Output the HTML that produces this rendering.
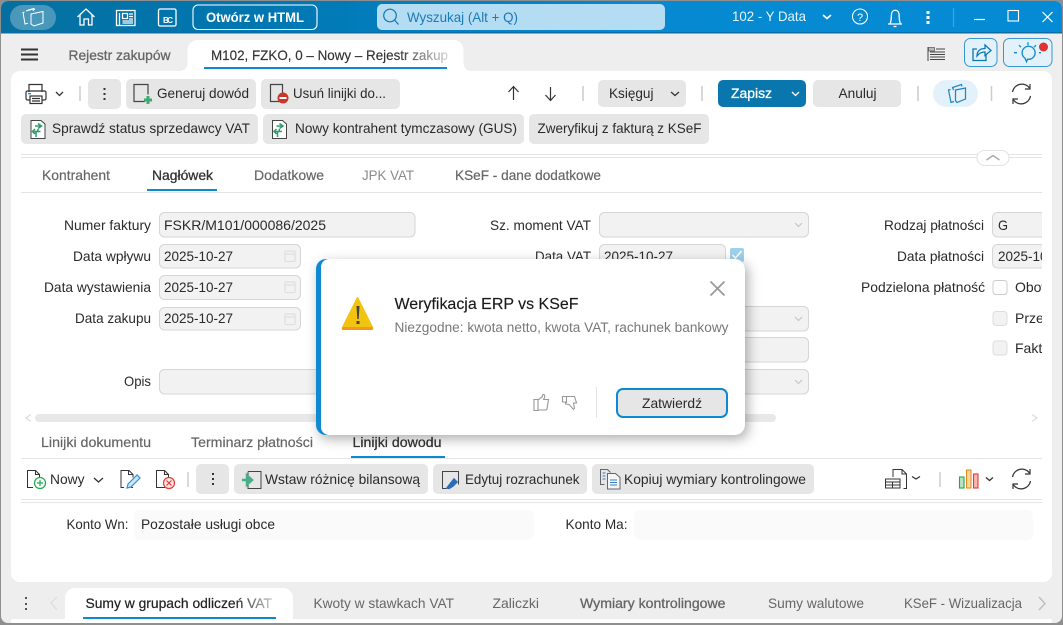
<!DOCTYPE html>
<html lang="pl"><head><meta charset="utf-8"><title>Rejestr zakupów</title>
<style>
html,body{margin:0;padding:0;width:1063px;height:625px;overflow:hidden;background:#fff}
svg{display:block;font-family:"Liberation Sans",sans-serif;font-size:14px}
.l{fill:#2a2a2a}.g{fill:#666}.b{font-weight:bold}
.f{fill:#f2f2f2;stroke:#d6d6d6}
.btn{fill:#e6e6e6}
.i{fill:none;stroke:#333;stroke-width:1.2}
.w{fill:none;stroke:#fff;stroke-width:1.3}
.sep{stroke:#ccc;stroke-width:1.5}
.cal{fill:none;stroke:#e0e0e0;stroke-width:1.3}
.chev{fill:none;stroke:#333;stroke-width:1.3}
.cg{fill:none;stroke:#c2c2c2;stroke-width:1}
</style></head><body>
<svg width="1063" height="625" viewBox="0 0 1063 625" xmlns="http://www.w3.org/2000/svg">
<defs>
<linearGradient id="tb" x1="0" x2="1" y1="0" y2="0"><stop offset="0" stop-color="#05709f"/><stop offset=".25" stop-color="#0077b2"/><stop offset=".6" stop-color="#0689d0"/><stop offset="1" stop-color="#058bd5"/></linearGradient>
<linearGradient id="fd1" gradientUnits="userSpaceOnUse" x1="398" x2="450" y1="0" y2="0"><stop offset="0" stop-color="#333"/><stop offset="1" stop-color="#ddd"/></linearGradient>
<linearGradient id="fd2" gradientUnits="userSpaceOnUse" x1="235" x2="273" y1="0" y2="0"><stop offset="0" stop-color="#222"/><stop offset="1" stop-color="#ccc"/></linearGradient>
<filter id="sh" x="-15%" y="-20%" width="130%" height="140%"><feDropShadow dx="3" dy="4" stdDeviation="6" flood-color="#000" flood-opacity=".32"/></filter>
<clipPath id="cr"><rect x="0" y="190" width="1042" height="240"/></clipPath>
</defs>
<rect width="1063" height="625" fill="#8f8f8f"/>
<rect x="1" y="1" width="1061" height="622" rx="7" fill="#eee"/>
<path d="M1 33V8a7 7 0 0 1 7-7h1047a7 7 0 0 1 7 7v25z" fill="url(#tb)"/>
<rect x="1" y="32" width="1061" height="1.5" fill="#0a6ea6"/>

<!-- title bar -->
<rect x="10" y="5" width="46" height="25" rx="12.5" fill="#fff" fill-opacity=".28"/>
<g class="w" style="stroke-width:1"><path d="M26 11l7-2 .5 2M24.500 12l-1.500.5 2 11.500 3-.8M28 10l6-1.500 .5 1.500"/><path d="M31 14l12-2.500v11.500l-9 3-3-2z"/></g>
<path d="M77.500 17l8.500-8 8.500 8M80 15v10h4v-6h4.500v6h3.500V15" class="w"/>
<g class="w" transform="translate(1.500 0)"><rect x="115" y="10.500" width="18.500" height="15"/><path d="M118 13v12M121 13.500h5v5h-5zM127.500 14h4M127.500 16.500h4M127.500 19h4M121 21h10.500M121 23h10.500"/></g>
<rect x="158.500" y="9" width="17.500" height="17" rx="1.500" class="w"/><text x="163" y="23" fill="#fff" font-size="8" font-weight="bold" textLength="10">BC</text>
<rect x="193" y="5" width="124" height="24.500" rx="5" fill="none" stroke="#fff" stroke-width="1.100"/>
<text x="206" y="22" fill="#fff" class="b" font-size="14" textLength="98" lengthAdjust="spacingAndGlyphs">Otwórz w HTML</text>
<rect x="377" y="4" width="288" height="26" rx="5" fill="#b4dcf3"/>
<circle cx="390" cy="15.500" r="6.300" fill="none" stroke="#1277b0" stroke-width="1.200"/><path d="M394.500 20l4 4.500" stroke="#1277b0" stroke-width="1.200"/>
<text x="407" y="22" fill="#1a7bb5" font-size="14" textLength="111" lengthAdjust="spacingAndGlyphs">Wyszukaj (Alt + Q)</text>
<text x="732" y="21" fill="#e6f4fc" font-size="14" textLength="74" lengthAdjust="spacingAndGlyphs">102 - Y Data</text>
<path d="M823 15l4 3.500 4-3.500" fill="none" stroke="#fff" stroke-width="1.600"/>
<circle cx="860" cy="16.500" r="7.500" class="w" style="stroke-width:1.100"/><text x="857" y="21" fill="#fff" font-size="11">?</text>
<path d="M888 24h14M890 24c1.500-3 1-6 1.500-10 .5-5 7-5 7.500 0 .4 4 0 7 1.500 10M893.500 26.500h3" class="w"/>
<g fill="#fff"><rect x="926.500" y="11" width="3" height="3"/><rect x="926.500" y="16" width="3" height="3"/><rect x="926.500" y="21" width="3" height="3"/></g>
<path d="M953.500 8v19" stroke="#3da2dc" stroke-width="1.300"/>
<path d="M974 19.500h11" stroke="#fff" stroke-width="1.200"/>
<rect x="1008" y="10.500" width="10.500" height="10.500" class="w" style="stroke-width:1.100"/>
<path d="M1042.500 12l10 10M1052.500 12l-10 10" class="w" style="stroke-width:1.200"/>

<!-- window tabs -->
<path d="M21 49.500h17M21 54.500h17M21 59.500h17" stroke="#333" stroke-width="2"/>
<text x="68.500" y="60" class="g" font-size="14" textLength="102" lengthAdjust="spacingAndGlyphs" stroke="#666" stroke-width=".3">Rejestr zakupów</text>
<g transform="translate(927 0)" stroke="#444" fill="none"><path d="M1 47v14" stroke-width="1"/><rect x="1.500" y="47.500" width="6" height="3.500" fill="#bbb" stroke="#555" stroke-width=".7"/><path d="M9 49h9M3 52h15M3 54.500h15M3 57h15M3 59.500h15" stroke-width="1.100"/></g>
<rect x="964.500" y="38.500" width="32.500" height="28" rx="6" fill="#e3f1fa" stroke="#3a97cc"/>
<path d="M986 55v5.500h-13V49h4M977 56c0-5 3-7.500 8-7.500V45l6 5.500-6 5v-3.500c-3 0-6 1-8 4z" fill="none" stroke="#0b78b4" stroke-width="1.300"/>
<rect x="1003.500" y="38.500" width="48.500" height="28" rx="6" fill="#e3f1fa" stroke="#3a97cc"/>
<path d="M1024 48a6.500 6.500 0 1 1 3.500 11l-1 2.500-1.500-3.500a6.500 6.500 0 0 1-1-10zM1028 42v3M1019 45l2 2M1036 45l-2 2M1014 52.500h3M1039 52.500h2" fill="none" stroke="#0f8ad0" stroke-width="1.300" transform="translate(0 .2)"/>
<circle cx="1043.500" cy="47" r="4.500" fill="#dd3333"/>

<!-- white panel -->
<rect x="11" y="71" width="1041" height="511" rx="9" fill="#fff"/>
<path d="M178.500 71c6 0 9-3 9-8V50a10 10 0 0 1 10-10h256a10 10 0 0 1 10 10v13c0 5 3 8 9 8z" fill="#fff"/>
<text x="211" y="60" fill="url(#fd1)" font-size="14" textLength="237" lengthAdjust="spacingAndGlyphs" stroke="url(#fd1)" stroke-width=".15">M102, FZKO, 0 – Nowy – Rejestr zakup</text>
<rect x="204" y="67" width="243" height="2" fill="#0a8ad0"/>

<!-- toolbar 1 -->
<g class="i"><path d="M29 92v-7.500h13V92"/><rect x="26" y="91" width="20" height="9" rx="1.500"/><rect x="30" y="96" width="12" height="7.500" fill="#fff"/><path d="M32 98.500h8M32 101h8"/></g><rect x="28" y="93" width="3" height="1.300" fill="#2a8ad0"/>
<path d="M56 92l3.500 3.500L63 92" class="chev"/>
<path d="M80 86v15" class="sep"/>
<rect x="88" y="79" width="33" height="30" rx="5" class="btn"/>
<g fill="#333"><rect x="103.500" y="88" width="2" height="2"/><rect x="103.500" y="93" width="2" height="2"/><rect x="103.500" y="98" width="2" height="2"/></g>
<rect x="126" y="79" width="130" height="30" rx="5" class="btn"/>
<path d="M145 101.500h-11v-17h14v10" fill="none" stroke="#444" stroke-width="1.200"/><path d="M148 96v8M144 100h8" stroke="#3faa72" stroke-width="3"/>
<text x="157" y="98" class="l" textLength="92" lengthAdjust="spacingAndGlyphs">Generuj dowód</text>
<rect x="261" y="79" width="139" height="30" rx="5" class="btn"/>
<path d="M280 101.500h-9.500v-17h12v9" fill="none" stroke="#444" stroke-width="1.200"/><circle cx="283" cy="98" r="5.500" fill="#c8372a"/><rect x="279.500" y="97" width="7" height="2" fill="#fff"/>
<text x="293" y="98" class="l" textLength="93" lengthAdjust="spacingAndGlyphs">Usuń linijki do...</text>
<path d="M513.500 100V87M508.500 92l5-5.500 5 5.500" fill="none" stroke="#333" stroke-width="1.200"/>
<path d="M550.500 87v13M545.500 95l5 5.500 5-5.500" fill="none" stroke="#333" stroke-width="1.200"/>
<path d="M583 86v15M702 86v15M918 86v15M991.500 86v15" class="sep"/>
<rect x="598" y="80" width="88" height="27" rx="5" class="btn"/><text x="609" y="98" class="l" textLength="44.500" lengthAdjust="spacingAndGlyphs">Księguj</text><path d="M671 92l4 3.500 4-3.500" class="chev"/>
<rect x="718" y="80" width="88" height="27" rx="5" fill="#0a76ae"/><text x="731" y="98" fill="#fff" textLength="41" lengthAdjust="spacingAndGlyphs" stroke="#fff" stroke-width=".3">Zapisz</text><path d="M792 92l3.500 3.500 3.500-3.500" fill="none" stroke="#fff" stroke-width="1.300"/>
<rect x="813" y="80" width="88" height="27" rx="5" class="btn"/><text x="838.500" y="98" class="l" textLength="38" lengthAdjust="spacingAndGlyphs">Anuluj</text>
<rect x="933" y="80" width="45" height="27" rx="13.500" fill="#e3f1fa"/>
<g transform="translate(8.500 0)" fill="none" stroke="#1a85c4" stroke-width="1.200"><path d="M945 90l-1-2.500 9-3 .5 2M942 89.500l-2 .5 2.500 12.500 3-1"/><path d="M947 90l10-2v11l-8.500 3.500-1.500-2z"/></g>
<g transform="translate(8.500 0)" fill="none" stroke="#333" stroke-width="1.200"><path d="M1004 92a9.500 9.500 0 0 1 17-4M1021.500 84v5h-5M1022 96a9.500 9.500 0 0 1-17 4M1004.500 104v-5h5"/></g>

<!-- toolbar 2 -->
<rect x="21" y="114" width="237" height="30" rx="5" class="btn"/>
<g id="gi"><path d="M31 120.500h10l4 3.500v14.500h-14z" fill="#fff" stroke="#444" stroke-width="1"/><path d="M38 123.500l3.500 2.500-3.500 2.500M35 126h6M38 129c0 2-1 3-3 3M35 129l-2.500 2.500 2.500 2.500M32.500 131.500h8M36 132v5" fill="none" stroke="#2a9d6a" stroke-width="1.500"/></g>
<text x="52" y="133" class="l" textLength="198" lengthAdjust="spacingAndGlyphs">Sprawdź status sprzedawcy VAT</text>
<rect x="263" y="114" width="261" height="30" rx="5" class="btn"/>
<use href="#gi" x="241.500" y="0"/>
<text x="295" y="133" class="l" textLength="222" lengthAdjust="spacingAndGlyphs">Nowy kontrahent tymczasowy (GUS)</text>
<rect x="529" y="114" width="180" height="30" rx="5" class="btn"/>
<text x="537.500" y="133" class="l" textLength="164" lengthAdjust="spacingAndGlyphs">Zweryfikuj z fakturą z KSeF</text>

<!-- divider -->
<path d="M21 154.500h1021M21 157.500h1021" stroke="#e4e4e4" stroke-width="1"/>
<rect x="977" y="150.500" width="32" height="15" rx="7.500" fill="#fff" stroke="#e2e2e2"/>
<path d="M986.500 160l6.500-4.500 6.500 4.500" fill="none" stroke="#aaa" stroke-width="1.500"/>

<!-- tabs -->
<text x="42" y="180" class="g" textLength="68" lengthAdjust="spacingAndGlyphs" stroke="#666" stroke-width=".2">Kontrahent</text>
<text x="152" y="180" fill="#333" textLength="61" lengthAdjust="spacingAndGlyphs" stroke="#333" stroke-width=".3">Nagłówek</text>
<text x="254" y="180" class="g" textLength="70" lengthAdjust="spacingAndGlyphs" stroke="#666" stroke-width=".2">Dodatkowe</text>
<text x="362" y="180" fill="#8a8a8a" textLength="52" lengthAdjust="spacingAndGlyphs">JPK VAT</text>
<text x="455" y="180" class="g" textLength="146" lengthAdjust="spacingAndGlyphs" stroke="#666" stroke-width=".2">KSeF - dane dodatkowe</text>
<rect x="21" y="192" width="1021" height="1" fill="#e4e4e4"/>
<rect x="147" y="189" width="70" height="2" fill="#0a8ad0"/>

<!-- form -->
<g clip-path="url(#cr)">
<text x="64" y="230" class="l" textLength="87" lengthAdjust="spacingAndGlyphs">Numer faktury</text>
<rect x="159.500" y="212.500" width="255.500" height="24.500" rx="5" class="f"/><text x="164" y="230" class="l" textLength="162" lengthAdjust="spacingAndGlyphs">FSKR/M101/000086/2025</text>
<text x="73" y="261" class="l" textLength="78" lengthAdjust="spacingAndGlyphs">Data wpływu</text>
<rect x="159.500" y="244.500" width="141" height="23.500" rx="5" class="f"/><text x="164" y="261" class="l" textLength="69" lengthAdjust="spacingAndGlyphs">2025-10-27</text>
<text x="44" y="292" class="l" textLength="107" lengthAdjust="spacingAndGlyphs">Data wystawienia</text>
<rect x="159.500" y="275.500" width="141" height="24" rx="5" class="f"/><text x="164" y="292" class="l" textLength="69" lengthAdjust="spacingAndGlyphs">2025-10-27</text>
<text x="75" y="323" class="l" textLength="76" lengthAdjust="spacingAndGlyphs">Data zakupu</text>
<rect x="159.500" y="307.500" width="141" height="22.500" rx="5" class="f"/><text x="164" y="323" class="l" textLength="69" lengthAdjust="spacingAndGlyphs">2025-10-27</text>
<g class="cal"><rect x="285" y="251" width="10" height="10.500" rx="1"/><path d="M285 254h10"/><rect x="285" y="282" width="10" height="10.500" rx="1"/><path d="M285 285h10"/><rect x="285" y="314" width="10" height="10.500" rx="1"/><path d="M285 317h10"/><rect x="710" y="251" width="10" height="10.500" rx="1"/></g>
<text x="124" y="386" class="l" textLength="27" lengthAdjust="spacingAndGlyphs">Opis</text>
<rect x="159.500" y="369.500" width="649" height="24.500" rx="5" class="f"/>

<text x="490" y="230" class="l" textLength="101" lengthAdjust="spacingAndGlyphs">Sz. moment VAT</text>
<rect x="599.500" y="212.500" width="209" height="24.500" rx="5" class="f"/>
<text x="535" y="261" class="l" textLength="56" lengthAdjust="spacingAndGlyphs">Data VAT</text>
<rect x="599.500" y="244.500" width="126" height="23.500" rx="5" class="f"/><text x="604" y="261" class="l" textLength="69" lengthAdjust="spacingAndGlyphs">2025-10-27</text>
<rect x="730" y="248" width="14" height="14" rx="2" fill="#9fd0ea"/><path d="M732.500 255l3 3 6-7" fill="none" stroke="#fff" stroke-width="1.500"/>
<rect x="700" y="306.500" width="108.500" height="24.500" rx="5" class="f"/>
<rect x="700" y="337.500" width="108.500" height="24.500" rx="5" class="f"/>
<path d="M795 223l3.500 3.500 3.500-3.500M795 317l3.500 3.500 3.500-3.500M795 380l3.500 3.500 3.500-3.500" class="cg"/>

<text x="884" y="230" class="l" textLength="100" lengthAdjust="spacingAndGlyphs">Rodzaj płatności</text>
<rect x="992.500" y="212.500" width="70" height="24.500" rx="5" class="f"/><text x="998" y="230" class="l" textLength="10" lengthAdjust="spacingAndGlyphs">G</text>
<text x="897" y="261" class="l" textLength="87" lengthAdjust="spacingAndGlyphs">Data płatności</text>
<rect x="992.500" y="244.500" width="70" height="23.500" rx="5" class="f"/><text x="998" y="261" class="l" textLength="69" lengthAdjust="spacingAndGlyphs">2025-10-27</text>
<text x="861" y="292" class="l" textLength="124" lengthAdjust="spacingAndGlyphs">Podzielona płatność</text>
<rect x="993" y="280.500" width="14" height="14" rx="3" fill="#fff" stroke="#ccc"/><text x="1015" y="292" class="l">Obowiązkowa</text>
<rect x="993" y="311.500" width="14" height="14" rx="3" fill="#f2f2f2" stroke="#ddd"/><text x="1015" y="323" class="l">Przelew</text>
<rect x="993" y="341" width="14" height="14" rx="3" fill="#f2f2f2" stroke="#ddd"/><text x="1015" y="353" class="l">Faktura</text>
</g>
<!-- scroll -->
<path d="M31 414.500l-5 3.500 5 3.500M1032 414.500l5 3.500-5 3.500" fill="none" stroke="#ddd" stroke-width="1.300"/>
<rect x="35" y="414" width="741" height="8" rx="4" fill="#e8e8e8"/>

<!-- lower tabs -->
<text x="41" y="447" class="g" textLength="110" lengthAdjust="spacingAndGlyphs" stroke="#666" stroke-width=".2">Linijki dokumentu</text>
<text x="191" y="447" class="g" textLength="122" lengthAdjust="spacingAndGlyphs" stroke="#666" stroke-width=".2">Terminarz płatności</text>
<text x="352.500" y="447" fill="#333" textLength="89" lengthAdjust="spacingAndGlyphs" stroke="#333" stroke-width=".25">Linijki dowodu</text>
<rect x="21" y="458" width="1021" height="1" fill="#e4e4e4"/>
<rect x="351" y="456" width="94" height="2" fill="#0a8ad0"/>

<!-- toolbar 3 -->
<path d="M33 487.500h-5.500v-17h8l4 4v4M35.500 470.500v4h4" class="i" style="stroke-width:1"/><circle cx="40" cy="483" r="5.500" fill="#fff" stroke="#1ea94c" stroke-width="1.200"/><path d="M40 480v6M37 483h6" stroke="#1ea94c" stroke-width="1.200"/>
<text x="50" y="484" class="l" textLength="34.500" lengthAdjust="spacingAndGlyphs">Nowy</text>
<path d="M94 478l4.500 4 4.500-4" class="chev"/>
<g transform="translate(1 0)"><path d="M123 487.500h-3v-17h8l4 4v3M130 487.500h2M127.500 470.500v4h4.500" class="i" style="stroke-width:1"/><path d="M126 488l1-4 9-9 3 3-9 9z" fill="#cde6f7" stroke="#2c8fd8" stroke-width="1.200"/></g>
<g transform="translate(2 0)"><path d="M163 487.500h-8.500v-17h8l4 4v3M162.500 470.500v4h4.500" class="i" style="stroke-width:1"/><circle cx="167" cy="483" r="5.500" fill="#fde8e8" stroke="#e53935" stroke-width="1.200"/><path d="M164.500 480.500l5 5M169.500 480.500l-5 5" stroke="#e53935" stroke-width="1.200"/></g>
<path d="M188 472v15" class="sep"/>
<rect x="196" y="464" width="33" height="30" rx="5" class="btn"/><g fill="#333"><rect x="212" y="473" width="2" height="2"/><rect x="212" y="478" width="2" height="2"/><rect x="212" y="483" width="2" height="2"/></g>
<rect x="234" y="464" width="194" height="30" rx="5" class="btn"/>
<path d="M248 471.500h13v17h-13v-4.500M248 476v-4.500" fill="none" stroke="#444" stroke-width="1"/><path d="M242 480h5M247 475.500l5 4.500-5 4.500z" stroke="#49ad85" stroke-width="2.500" fill="#49ad85"/>
<text x="265" y="484" class="l" textLength="155" lengthAdjust="spacingAndGlyphs">Wstaw różnicę bilansową</text>
<rect x="433" y="464" width="154" height="30" rx="5" class="btn"/>
<path d="M447 488.500h-4.500v-17h16v13" fill="none" stroke="#444" stroke-width="1"/><path d="M447 488l3-4 4-5 3 3-4 4-4 2.500z" fill="#2b6cb8" stroke="#2b6cb8" stroke-width="1.500"/>
<text x="465" y="484" class="l" textLength="114.500" lengthAdjust="spacingAndGlyphs">Edytuj rozrachunek</text>
<rect x="592" y="464" width="222" height="30" rx="5" class="btn"/>
<g fill="none" stroke="#666" stroke-width="1"><path d="M604.500 484.500h-4v-15h7l3 3"/><path d="M607.500 473.500h8l4.500 4v11.500h-12.500z" fill="#f5f5f5"/><path d="M610 480h7M610 482.500h7M610 485h7" stroke="#3a7fc4"/><path d="M602.500 473h3M602.500 476h3M602.500 479h3" stroke="#3a7fc4"/></g>
<text x="624" y="484" class="l" textLength="182" lengthAdjust="spacingAndGlyphs">Kopiuj wymiary kontrolingowe</text>
<g class="i" style="stroke-width:1" transform="translate(7 0)"><path d="M886 477v-7.500h9l4.500 4.500v14.500h-3M895 469.500v4.500h4.500"/><rect x="878.500" y="479" width="14.500" height="9"/><path d="M878.500 482h14.500M885.500 482v6M878.500 485h14.500"/></g>
<path d="M912 476.500l4 2.500 4-2.500M986 477.500l3.500 3 3.500-3" class="chev"/>
<path d="M940 472v15" class="sep"/>
<g transform="translate(8.500 0)"><rect x="951" y="477" width="4.500" height="11" fill="#b9e3c4" stroke="#1ea94c" stroke-width="1.100"/><rect x="958" y="470" width="4.500" height="18" fill="#fad7a0" stroke="#ea8b26" stroke-width="1.100"/><rect x="965" y="474" width="4.500" height="14" fill="#f5b5b5" stroke="#e53935" stroke-width="1.100"/></g>
<g transform="translate(8.500 0)" fill="none" stroke="#333" stroke-width="1.200"><path d="M1004 477a9.500 9.500 0 0 1 17-4M1021.500 469v5h-5M1022 481a9.500 9.500 0 0 1-17 4M1004.500 489v-5h5"/></g>
<path d="M21 499.500h1021M21 502.500h1021" stroke="#e6e6e6"/>

<!-- konto -->
<text x="66.500" y="529" class="l" textLength="62" lengthAdjust="spacingAndGlyphs">Konto Wn:</text>
<rect x="134" y="510" width="400" height="30" rx="6" fill="#fafafa"/><text x="141" y="529" class="l" textLength="134" lengthAdjust="spacingAndGlyphs">Pozostałe usługi obce</text>
<text x="565.500" y="529" class="l" textLength="62" lengthAdjust="spacingAndGlyphs">Konto Ma:</text>
<rect x="634" y="510" width="399" height="30" rx="6" fill="#fafafa"/>

<!-- footer -->
<g fill="#555"><rect x="25" y="597" width="2" height="2"/><rect x="25" y="603" width="2" height="2"/><rect x="25" y="608" width="2" height="2"/></g>
<path d="M57 597l-6 6 6 7" fill="none" stroke="#ddd" stroke-width="1.300"/>
<path d="M1039 597l6 6.500-6 6.500" fill="none" stroke="#bbb" stroke-width="1.300"/>
<path d="M65 619v-21a10 10 0 0 1 10-10h208a10 10 0 0 1 10 10v21z" fill="#fff"/>
<text x="85.500" y="608" fill="url(#fd2)" textLength="186.500" lengthAdjust="spacingAndGlyphs" stroke="url(#fd2)" stroke-width=".2">Sumy w grupach odliczeń VAT</text>
<rect x="83" y="617" width="193" height="2" fill="#0a8ad0"/>
<text x="313.500" y="608" class="g" textLength="140.500" lengthAdjust="spacingAndGlyphs">Kwoty w stawkach VAT</text>
<text x="492.500" y="608" class="g" textLength="46.500" lengthAdjust="spacingAndGlyphs">Zaliczki</text>
<text x="580" y="608" class="g" textLength="145.500" lengthAdjust="spacingAndGlyphs" stroke="#666" stroke-width=".3">Wymiary kontrolingowe</text>
<text x="768" y="608" class="g" textLength="96" lengthAdjust="spacingAndGlyphs">Sumy walutowe</text>
<text x="904" y="608" class="g" textLength="118" lengthAdjust="spacingAndGlyphs">KSeF - Wizualizacja</text>
<rect x="11" y="619" width="1041" height="4" rx="2" fill="#fff"/>

<!-- modal -->
<rect x="316" y="259" width="429" height="176" rx="10" fill="#0a8ad0" filter="url(#sh)"/>
<path d="M329 259h406a10 10 0 0 1 10 10v156a10 10 0 0 1-10 10H329a8 8 0 0 1-8-8V267a8 8 0 0 1 8-8z" fill="#fff"/>
<path d="M358 297l15 30a2 2 0 0 1-1 3h-29a2 2 0 0 1-1-3l15-30z" fill="#f2c40f"/><rect x="342" y="327" width="31" height="3" rx="1.500" fill="#ef9a1a"/>
<path d="M356.500 306h3l-.8 13h-1.400zM356.500 321h3v3h-3z" fill="#444"/>
<text x="394.500" y="309" fill="#1a1a1a" font-size="16" textLength="184" lengthAdjust="spacingAndGlyphs" stroke="#1a1a1a" stroke-width=".15">Weryfikacja ERP vs KSeF</text>
<text x="394.500" y="332" fill="#787878" font-size="13.500" textLength="334" lengthAdjust="spacingAndGlyphs">Niezgodne: kwota netto, kwota VAT, rachunek bankowy</text>
<path d="M710.500 281.500l14 14M724.500 281.500l-14 14" stroke="#999" stroke-width="1.800"/>
<path d="M534 399.500h4v11h-4zM538 400l4-3 1-2.500c2-.5 2.500 2 .5 5h5l-1.500 9.500c-.5 1-1.500 1-2 1H538" fill="none" stroke="#999" stroke-width="1.100"/>
<path d="M562.500 396.500h12l2 6.500h-3l.5 3 .5 2-1 1.500-3-3.500-1.500-1.500-3.500-.5v-2h-3zM566.500 397v6" fill="none" stroke="#999" stroke-width="1.100"/>
<path d="M596.500 387v31" stroke="#e2e2e2"/>
<rect x="617" y="389" width="110" height="28" rx="6" fill="#e6e6e6" stroke="#0a8ad0" stroke-width="2"/>
<text x="642" y="408" class="l" textLength="60" lengthAdjust="spacingAndGlyphs">Zatwierdź</text>
</svg>
</body></html>
